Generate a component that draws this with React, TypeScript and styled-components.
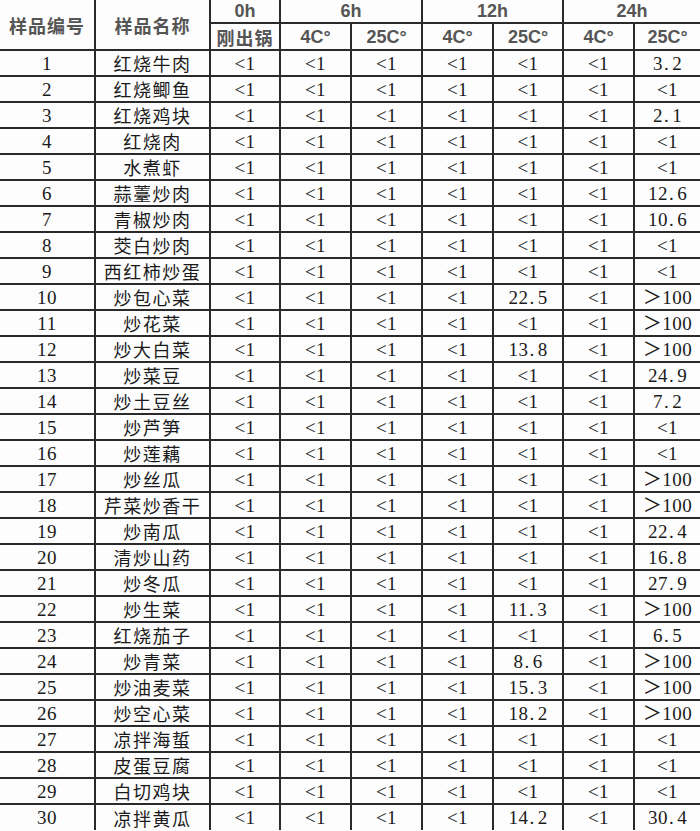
import React from 'react';
import styled, { createGlobalStyle } from 'styled-components';

const GlobalStyle = createGlobalStyle`
  html, body {
    margin: 0;
    padding: 0;
    background: #fdfdfd;
  }
`;

const Table = styled.table`
  width: 700px;
  table-layout: fixed;
  border-collapse: collapse;
  border-style: hidden;
  background: #fdfdfd;
`;

const HeadCell = styled.th<{ $h?: number }>`
  height: ${({ $h }) => $h ?? 22}px;
  padding: 0;
  border: 2px solid #2a2a2a;
  font-family: 'Noto Sans CJK SC', 'Liberation Sans', sans-serif;
  font-size: 18px;
  font-weight: 700;
  color: #555555;
  text-align: center;
  vertical-align: middle;
  line-height: 1;
  letter-spacing: 1px;
`;

const UnitHead = styled(HeadCell)`
  font-family: 'Liberation Sans', 'Noto Sans CJK SC', sans-serif;
  font-size: 18px;
  letter-spacing: 0;
`;

const Row = styled.tr`
  height: 26px;
`;

const Cell = styled.td<{ $cjk?: boolean }>`
  padding: 0;
  border: 2px solid #2a2a2a;
  text-align: center;
  vertical-align: middle;
  line-height: 1;
  color: #1a1a1a;
  font-family: ${({ $cjk }) =>
    $cjk
      ? "'Noto Sans CJK SC', sans-serif"
      : "'Liberation Serif', 'Noto Sans CJK SC', serif"};
  font-size: ${({ $cjk }) => ($cjk ? 18 : 19)}px;
  letter-spacing: ${({ $cjk }) => ($cjk ? 1.5 : 0.5)}px;
`;

const Dot = styled.span`
  padding: 0 3px 0 1px;
`;

const Value: React.FC<{ v: string }> = ({ v }) => {
  const i = v.indexOf('.');
  if (i < 0) return <>{v}</>;
  return (
    <>
      {v.slice(0, i)}
      <Dot>.</Dot>
      {v.slice(i + 1)}
    </>
  );
};

// [name, 12h 25C°, 24h 25C°]
const samples: [string, string, string][] = [
  ['红烧牛肉', '<1', '3.2'],
  ['红烧鲫鱼', '<1', '<1'],
  ['红烧鸡块', '<1', '2.1'],
  ['红烧肉', '<1', '<1'],
  ['水煮虾', '<1', '<1'],
  ['蒜薹炒肉', '<1', '12.6'],
  ['青椒炒肉', '<1', '10.6'],
  ['茭白炒肉', '<1', '<1'],
  ['西红柿炒蛋', '<1', '<1'],
  ['炒包心菜', '22.5', '＞100'],
  ['炒花菜', '<1', '＞100'],
  ['炒大白菜', '13.8', '＞100'],
  ['炒菜豆', '<1', '24.9'],
  ['炒土豆丝', '<1', '7.2'],
  ['炒芦笋', '<1', '<1'],
  ['炒莲藕', '<1', '<1'],
  ['炒丝瓜', '<1', '＞100'],
  ['芹菜炒香干', '<1', '＞100'],
  ['炒南瓜', '<1', '22.4'],
  ['清炒山药', '<1', '16.8'],
  ['炒冬瓜', '<1', '27.9'],
  ['炒生菜', '11.3', '＞100'],
  ['红烧茄子', '<1', '6.5'],
  ['炒青菜', '8.6', '＞100'],
  ['炒油麦菜', '15.3', '＞100'],
  ['炒空心菜', '18.2', '＞100'],
  ['凉拌海蜇', '<1', '<1'],
  ['皮蛋豆腐', '<1', '<1'],
  ['白切鸡块', '<1', '<1'],
  ['凉拌黄瓜', '14.2', '30.4'],
];

const widths = [95, 115, 70, 71, 71, 71, 70, 71, 66];

export default function App() {
  return (
    <>
      <GlobalStyle />
      <Table>
        <colgroup>
          {widths.map((w, i) => (
            <col key={i} style={{ width: w }} />
          ))}
        </colgroup>
        <thead>
          <tr>
            <HeadCell rowSpan={2}>样品编号</HeadCell>
            <HeadCell rowSpan={2}>样品名称</HeadCell>
            <UnitHead>0h</UnitHead>
            <UnitHead colSpan={2}>6h</UnitHead>
            <UnitHead colSpan={2}>12h</UnitHead>
            <UnitHead colSpan={2}>24h</UnitHead>
          </tr>
          <tr>
            <HeadCell $h={25}>刚出锅</HeadCell>
            <UnitHead $h={25}>4C°</UnitHead>
            <UnitHead $h={25}>25C°</UnitHead>
            <UnitHead $h={25}>4C°</UnitHead>
            <UnitHead $h={25}>25C°</UnitHead>
            <UnitHead $h={25}>4C°</UnitHead>
            <UnitHead $h={25}>25C°</UnitHead>
          </tr>
        </thead>
        <tbody>
          {samples.map(([name, h12, h24], i) => {
            const values = ['<1', '<1', '<1', '<1', h12, '<1', h24];
            return (
              <Row key={i}>
                <Cell>{i + 1}</Cell>
                <Cell $cjk>{name}</Cell>
                {values.map((v, j) => (
                  <Cell key={j}>
                    <Value v={v} />
                  </Cell>
                ))}
              </Row>
            );
          })}
        </tbody>
      </Table>
    </>
  );
}
